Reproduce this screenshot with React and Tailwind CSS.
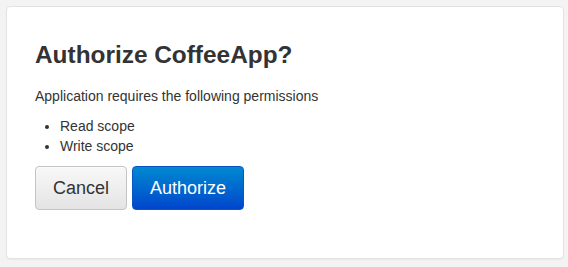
export default function App() {
  return (
    <div className="min-h-screen bg-[#f3f3f3] p-[6px] font-['Liberation_Sans',Arial,sans-serif] text-[#333]">
      <div className="h-[253px] w-[558px] rounded-[4px] border border-[#e3e3e3] bg-white px-[28px] pt-[33px] shadow-[0_1px_1px_rgba(0,0,0,0.04)]">
        <h2 className="text-[24.4px] font-bold leading-[30px] text-[#333]">Authorize CoffeeApp?</h2>
        <p className="mt-[16px] text-[14px] leading-[20px]">Application requires the following permissions</p>
        <ul className="mt-[10px] list-disc pl-[25px] text-[14px] leading-[20px]">
          <li>Read scope</li>
          <li>Write scope</li>
        </ul>
        <div className="mt-[10px] flex gap-[5px]">
          <button className="h-[44px] rounded-[4px] border border-[#c4c4c4] bg-gradient-to-b from-[#f8f8f8] to-[#e4e4e4] px-[17px] text-[18px] text-[#333] shadow-[inset_0_1px_0_rgba(255,255,255,0.5)]">
            Cancel
          </button>
          <button className="h-[44px] rounded-[4px] border border-[#0a55c4] bg-gradient-to-b from-[#0088d0] to-[#0044cc] px-[17px] text-[18px] text-white">
            Authorize
          </button>
        </div>
      </div>
    </div>
  )
}
